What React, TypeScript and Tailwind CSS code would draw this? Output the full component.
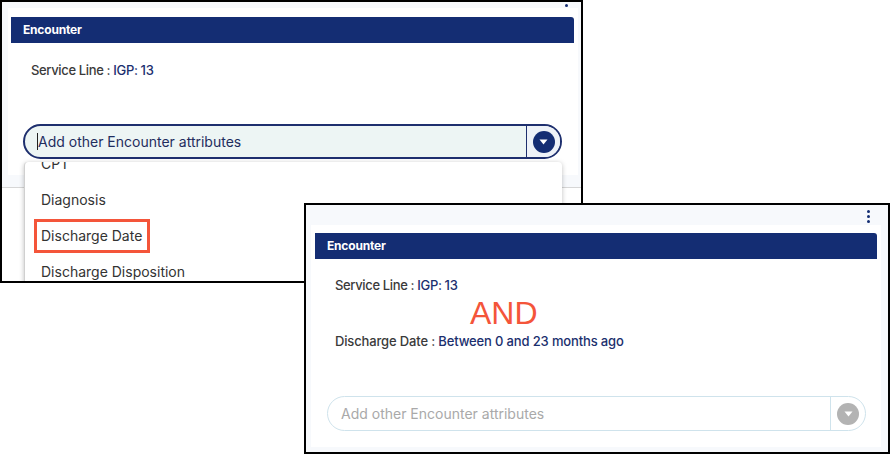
import React from "react";

function Caret() {
  return (
    <svg width="9" height="6" viewBox="0 0 9 6">
      <path d="M0.5 0.5 H8.5 L4.5 5.5 Z" fill="#ffffff" />
    </svg>
  );
}

function Dots() {
  return (
    <div className="flex flex-col items-center gap-[2px]">
      <span className="block w-[3px] h-[3px] rounded-full bg-[#142d73]" />
      <span className="block w-[3px] h-[3px] rounded-full bg-[#142d73]" />
      <span className="block w-[3px] h-[3px] rounded-full bg-[#142d73]" />
    </div>
  );
}

function Header() {
  return (
    <div className="h-[26px] bg-[#142d73] rounded-tr-[3px] flex items-center pl-[12px] text-white text-[12px] font-bold tracking-[-0.2px]">
      Encounter
    </div>
  );
}

function ServiceLine() {
  return (
    <div className="h-[20px] flex items-center text-[13px] font-medium tracking-[-0.35px]">
      <span className="text-[#3a3a3a]">Service Line :&nbsp;</span>
      <span className="text-[#1b2f6e]">IGP: 13</span>
    </div>
  );
}

export default function App() {
  return (
    <div
      className="relative w-[891px] h-[454px] bg-white overflow-hidden"
      style={{ fontFamily: "Inter, 'Noto Sans', sans-serif" }}
    >
      {/* Screenshot 1 */}
      <div className="absolute left-0 top-0 w-[583px] h-[283px] border-2 border-black overflow-hidden bg-[#f7f9fc]">
        <div className="absolute right-[13px] top-[-8px]">
          <Dots />
        </div>
        <div className="flex flex-col h-full">
          <div className="ml-[6px] mt-[6px] w-[570px] h-[167px] bg-white flex flex-col pl-[3px] pr-[4px]">
            <div className="mt-[9px]">
              <Header />
            </div>
            <div className="ml-[20px] mt-[18px]">
              <ServiceLine />
            </div>
            <div className="ml-[12px] mt-[43px] w-[539px] h-[35px] flex rounded-[18px] border-2 border-[#1e2f6e] bg-[#edf5f4] overflow-hidden">
              <div className="flex-1 flex items-center pl-[12px] border-r border-[#1e2f6e]">
                <span className="w-[1px] h-[17px] bg-[#222]" />
                <span className="text-[14px] text-[#1f2d5e] tracking-[0px]">Add other Encounter attributes</span>
              </div>
              <div className="w-[33px] flex items-center justify-center bg-[#eef2f8]">
                <div className="w-[22px] h-[22px] rounded-full bg-[#142d73] flex items-center justify-center">
                  <Caret />
                </div>
              </div>
            </div>
          </div>
          <div className="h-[12px]" />
          <div className="h-[1px] bg-[#d6d6d6]" />
          <div className="flex-1 bg-white" />
        </div>

        {/* dropdown menu */}
        <div className="absolute left-[22px] top-[160px] w-[538px] h-[140px] bg-white border-l border-[#d0d0d0] rounded-t-[4px] shadow-[0_1px_5px_rgba(0,0,0,0.25)] overflow-hidden">
          <div className="mt-[-17px] flex flex-col text-[14px] text-[#333333] tracking-[0px]">
            <div className="h-[36px] flex items-center pl-[16px]">CPT</div>
            <div className="h-[36px] flex items-center pl-[16px]">Diagnosis</div>
            <div className="h-[36px] flex items-center pl-[16px]">Discharge Date</div>
            <div className="h-[36px] flex items-center pl-[16px]">Discharge Disposition</div>
          </div>
        </div>
        <div className="absolute left-[32px] top-[217px] w-[116px] h-[34px] border-[3px] border-[#f4553a]" />
      </div>

      {/* Screenshot 2 */}
      <div className="absolute left-[304px] top-[203px] w-[586px] h-[251px] border-2 border-black overflow-hidden bg-[#f7f9fc]">
        <div className="absolute left-[561px] top-[5px]">
          <Dots />
        </div>
        <div className="ml-[5px] mt-[20px] w-[570px] h-[222px] bg-white flex flex-col">
          <div className="mt-[8px] ml-[4px] w-[562px]">
            <Header />
          </div>
          <div className="ml-[24px] mt-[17px]">
            <ServiceLine />
          </div>
          <div className="ml-[24px] mt-[36px] h-[20px] flex items-center text-[13px] font-medium tracking-[-0.15px]">
            <span className="text-[#3a3a3a]">Discharge Date :&nbsp;</span>
            <span className="text-[#1b2f6e]">Between 0 and 23 months ago</span>
          </div>
          <div className="ml-[16px] mt-[44px] w-[539px] h-[35px] flex rounded-[18px] border border-[#cfe3ec] bg-white overflow-hidden">
            <div className="flex-1 flex items-center pl-[13px] border-r border-[#cfe3ec]">
              <span className="text-[14px] text-[#a9a9a9] tracking-[0px]">Add other Encounter attributes</span>
            </div>
            <div className="w-[34px] flex items-center justify-center">
              <div className="w-[22px] h-[22px] rounded-full bg-[#b3b3b3] flex items-center justify-center">
                <Caret />
              </div>
            </div>
          </div>
        </div>
        <div
          className="absolute left-[164px] top-[90px] text-[32px] leading-[36px] text-[#f4553a]"
          style={{ fontFamily: "'Liberation Sans', Arial, sans-serif" }}
        >
          AND
        </div>
      </div>
    </div>
  );
}
